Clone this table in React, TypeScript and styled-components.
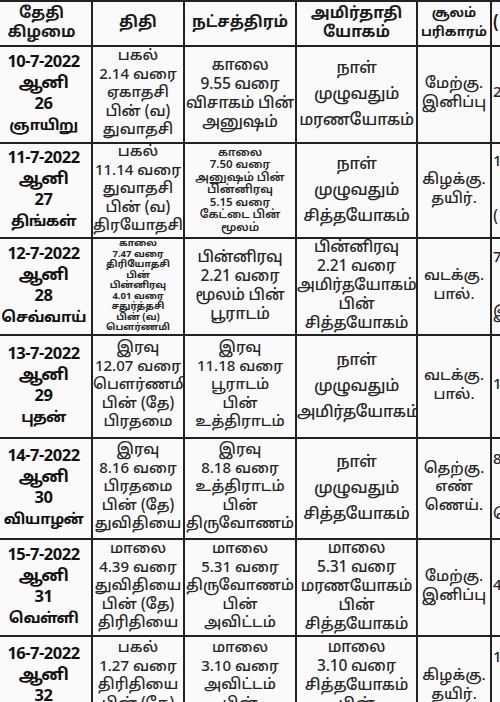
import React from "react";
import styled, { createGlobalStyle } from "styled-components";

const GlobalStyle = createGlobalStyle`
  body {
    margin: 0;
    background: #fafafa;
  }
`;

const Page = styled.div`
  width: 500px;
  height: 702px;
  overflow: hidden;
  background: #fafafa;
  font-family: "Noto Sans Tamil", "Lohit Tamil", "Noto Sans", "Liberation Sans", sans-serif;
  color: #262626;
`;

const Table = styled.table`
  margin-left: -10px;
  border-collapse: collapse;
  table-layout: fixed;
  width: 558px;
`;

const Row = styled.tr<{ $h: number }>`
  height: ${(p) => p.$h}px;
`;

type Size = "head" | "headS" | "date" | "normal" | "mid" | "small" | "tiny" | "large";

const fonts: Record<Size, string> = {
  head: "font-size: 15.5px; line-height: 19px; font-weight: 700; color: #1a1a1a;",
  headS: "font-size: 13px; line-height: 19px; font-weight: 700; color: #1a1a1a;",
  date: "font-size: 16.5px; line-height: 21px; font-weight: 700; color: #111; letter-spacing: -0.5px; padding-left: 4px;",
  normal: "font-size: 15px; line-height: 18.5px; font-weight: 500;",
  mid: "font-size: 15.5px; line-height: 19px; font-weight: 500; letter-spacing: -0.2px;",
  small: "font-size: 11.5px; line-height: 12.5px; font-weight: 600;",
  tiny: "font-size: 9.5px; line-height: 10.5px; font-weight: 700;",
  large: "font-size: 16px; line-height: 26px; font-weight: 500; letter-spacing: -0.3px;",
};

const Cell = styled.td<{ $size: Size; $edge?: boolean }>`
  border: 2px solid #222;
  text-align: ${(p) => (p.$edge ? "left" : "center")};
  vertical-align: middle;
  padding: 0 ${(p) => (p.$edge ? "1px" : "0")};
  white-space: nowrap;
  overflow: hidden;
  ${(p) => fonts[p.$size]}
`;

const Line = styled.div``;

// weekday name under the date, set a touch tighter so the long ones fit
const Day = styled.div`
  font-size: 15px;
  letter-spacing: -0.6px;
`;

type CellData = { lines: string[]; size: Size };

const c = (size: Size, ...lines: string[]): CellData => ({ size, lines });

const widths = [101, 92, 112, 121, 74, 58];

const header: CellData[] = [
  c("head", "தேதி", "கிழமை"),
  c("head", "திதி"),
  c("head", "நட்சத்திரம்"),
  c("head", "அமிர்தாதி", "யோகம்"),
  c("headS", "சூலம்", "பரிகாரம்"),
  c("head", "("),
];

const rows: { h: number; cells: CellData[] }[] = [
  {
    h: 97,
    cells: [
      c("date", "10-7-2022", "ஆனி", "26", "ஞாயிறு"),
      c("normal", "பகல்", "2.14 வரை", "ஏகாதசி", "பின் (வ)", "துவாதசி"),
      c("mid", "காலை", "9.55 வரை", "விசாகம் பின்", "அனுஷம்"),
      c("large", "நாள்", "முழுவதும்", "மரணயோகம்"),
      c("normal", "மேற்கு.", "இனிப்பு"),
      c("normal", "2"),
    ],
  },
  {
    h: 95,
    cells: [
      c("date", "11-7-2022", "ஆனி", "27", "திங்கள்"),
      c("normal", "பகல்", "11.14 வரை", "துவாதசி", "பின் (வ)", "திரயோதசி"),
      c("small", "காலை", "7.50 வரை", "அனுஷம் பின்", "பின்னிரவு", "5.15 வரை", "கேட்டை பின்", "மூலம்"),
      c("large", "நாள்", "முழுவதும்", "சித்தயோகம்"),
      c("normal", "கிழக்கு.", "தயிர்."),
      c("normal", "1", "", "", "("),
    ],
  },
  {
    h: 89,
    cells: [
      c("date", "12-7-2022", "ஆனி", "28", "செவ்வாய்"),
      c("tiny", "காலை", "7.47 வரை", "திரியோதசி", "பின்", "பின்னிரவு", "4.01 வரை", "சதுர்த்தசி", "பின் (வ)", "பௌர்ணமி"),
      c("mid", "பின்னிரவு", "2.21 வரை", "மூலம் பின்", "பூராடம்"),
      c("mid", "பின்னிரவு", "2.21 வரை", "அமிர்தயோகம்", "பின்", "சித்தயோகம்"),
      c("normal", "வடக்கு.", "பால்."),
      c("normal", "7", "", "", "இ"),
    ],
  },
  {
    h: 103,
    cells: [
      c("date", "13-7-2022", "ஆனி", "29", "புதன்"),
      c("normal", "இரவு", "12.07 வரை", "பௌர்ணமி", "பின் (தே)", "பிரதமை"),
      c("normal", "இரவு", "11.18 வரை", "பூராடம்", "பின்", "உத்திராடம்"),
      c("large", "நாள்", "முழுவதும்", "அமிர்தயோகம்"),
      c("normal", "வடக்கு.", "பால்."),
      c("normal", "1"),
    ],
  },
  {
    h: 101,
    cells: [
      c("date", "14-7-2022", "ஆனி", "30", "வியாழன்"),
      c("normal", "இரவு", "8.16 வரை", "பிரதமை", "பின் (தே)", "துவிதியை"),
      c("normal", "இரவு", "8.18 வரை", "உத்திராடம்", "பின்", "திருவோணம்"),
      c("large", "நாள்", "முழுவதும்", "சித்தயோகம்"),
      c("normal", "தெற்கு.", "எண்", "ணெய்."),
      c("normal", "8", "", "", "ெ"),
    ],
  },
  {
    h: 97,
    cells: [
      c("date", "15-7-2022", "ஆனி", "31", "வெள்ளி"),
      c("normal", "மாலை", "4.39 வரை", "துவிதியை", "பின் (தே)", "திரிதியை"),
      c("normal", "மாலை", "5.31 வரை", "திருவோணம்", "பின்", "அவிட்டம்"),
      c("mid", "மாலை", "5.31 வரை", "மரணயோகம்", "பின்", "சித்தயோகம்"),
      c("normal", "மேற்கு.", "இனிப்பு"),
      c("normal", "4"),
    ],
  },
  {
    h: 101,
    cells: [
      c("date", "16-7-2022", "ஆனி", "32", "சனி"),
      c("normal", "பகல்", "1.27 வரை", "திரிதியை", "பின் (தே)", "சதுர்த்தி"),
      c("normal", "மாலை", "3.10 வரை", "அவிட்டம்", "பின்", "சதயம்"),
      c("mid", "மாலை", "3.10 வரை", "சித்தயோகம்", "பின்", "அமிர்தயோகம்"),
      c("normal", "கிழக்கு.", "தயிர்."),
      c("normal", "1", "", "", "("),
    ],
  },
];

const TableCell = ({ data, edge }: { data: CellData; edge?: boolean }) => (
  <Cell $size={data.size} $edge={edge}>
    {data.lines.map((l, i) =>
      data.size === "date" && i === 3 ? (
        <Day key={i}>{l}</Day>
      ) : (
        <Line key={i}>{l || "\u00a0"}</Line>
      )
    )}
  </Cell>
);

export default function App() {
  return (
    <Page>
      <GlobalStyle />
      <Table>
        <colgroup>
          {widths.map((w, i) => (
            <col key={i} style={{ width: w }} />
          ))}
        </colgroup>
        <tbody>
          <Row $h={45}>
            {header.map((d, i) => (
              <TableCell key={i} data={d} edge={i === 5} />
            ))}
          </Row>
          {rows.map((r, i) => (
            <Row key={i} $h={r.h}>
              {r.cells.map((d, j) => (
                <TableCell key={j} data={d} edge={j === 5} />
              ))}
            </Row>
          ))}
        </tbody>
      </Table>
    </Page>
  );
}
